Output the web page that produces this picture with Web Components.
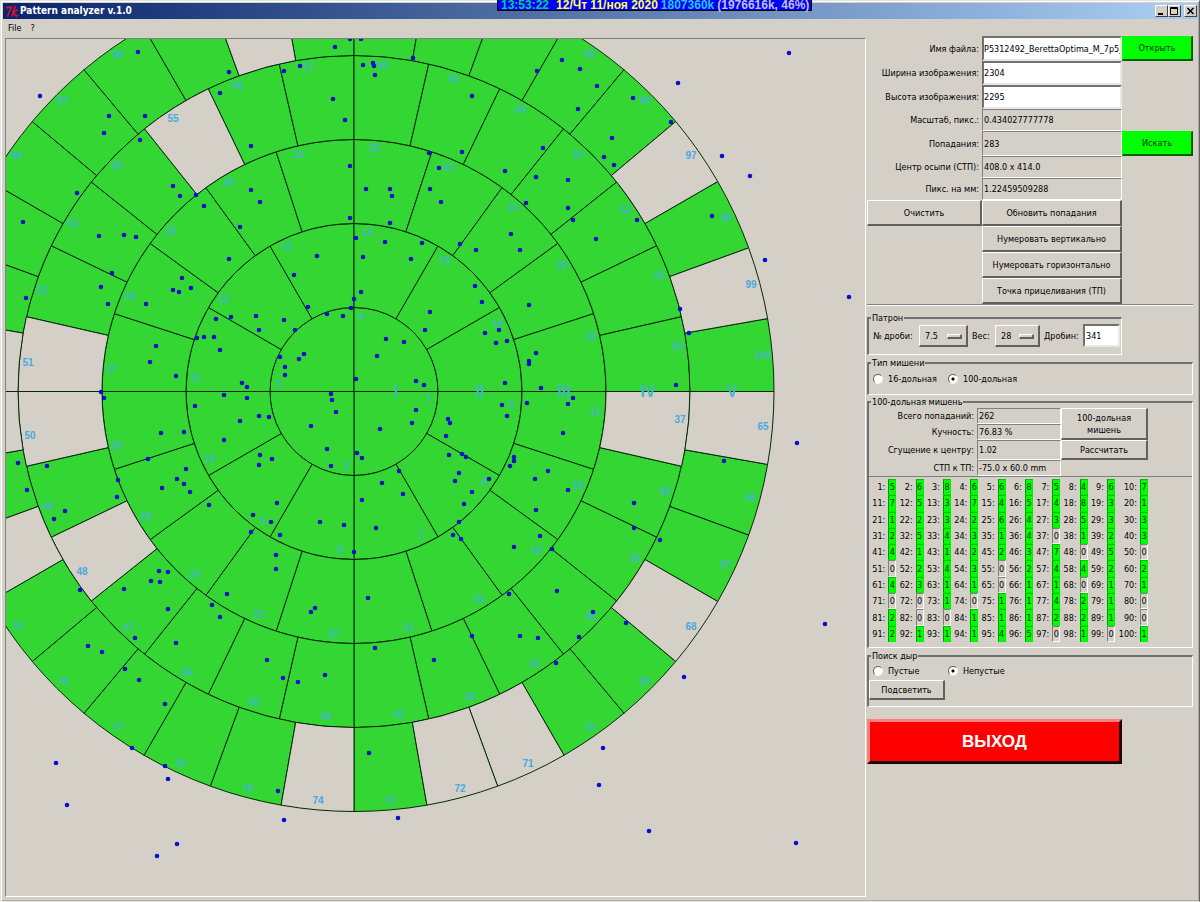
<!DOCTYPE html>
<html lang="ru">
<head>
<meta charset="utf-8">
<title>Pattern analyzer v.1.0</title>
<style>
  html, body { margin: 0; }
  body {
    background: #d4d0c8;
    color: #000;
    font: 9px/12px "DejaVu Sans Condensed", "Noto Sans", sans-serif;
  }
</style>
</head>
<body>
<pa-app></pa-app>

<script>
const define = (name, html, init) => {
  const template = document.createElement('template');
  template.innerHTML = html;
  customElements.define(name, class extends HTMLElement {
    constructor() {
      super();
      this.attachShadow({ mode: 'open' }).append(template.content.cloneNode(true));
    }
    connectedCallback() {
      if (init && !this.ready) { this.ready = true; init(this, this.shadowRoot); }
    }
  });
};

// Hits per sector, sectors 1..100.
const COUNTS = [
  5,6,8,6,6,8,5,4,6,7,
  7,5,3,7,4,5,4,8,3,1,
  1,2,3,2,6,4,3,5,3,3,
  2,5,4,3,1,4,0,1,2,3,
  4,1,1,2,2,3,7,0,5,0,
  0,2,4,3,0,2,4,4,2,2,
  4,3,1,1,0,1,1,0,1,1,
  0,0,1,0,1,1,4,2,1,0,
  2,0,0,1,1,1,2,2,1,0,
  2,1,1,1,4,5,0,1,0,1
];

// Pellet hits as x,y pairs.
const HITS = `138,52 40,96 109,116 104,133 145,116 140,140 229,72 220,93 251,146 284,71 300,66 333,99 345,120
335,47 350,39 361,39 363,65 373,63 374,66 375,75 413,58 429,153 439,168 430,189 441,202 350,166 366,189 390,189
392,196 390,223 350,218 356,238 173,186 180,196 196,195 204,206 251,190 260,202 240,227 77,193 23,222 99,236
124,235 136,237 562,60 580,69 537,71 597,86 472,96 578,109 633,98 671,122 612,138 604,157 614,165 543,148
462,152 505,171 536,177 568,180 526,203 568,208 573,220 637,220 511,234 596,239 712,216 678,83 789,53 722,156
750,176 112,273 101,287 108,304 26,298 146,304 182,278 173,290 179,292 191,288 229,259 317,256 294,275 308,307
327,314 343,316 351,308 354,299 361,292 363,257 385,242 422,243 411,259 430,312 425,330 386,339 404,342 377,356
216,319 231,317 256,316 259,330 284,320 295,330 197,338 204,337 214,337 220,350 280,357 299,359 304,354 285,367
285,375 156,346 150,362 176,376 242,383 247,387 224,395 247,398 195,406 101,392 104,398 240,421 259,416 269,417
224,440 356,379 331,394 332,400 336,412 311,426 380,429 416,381 424,385 416,410 412,423 327,449 357,453 362,458
331,466 260,455 272,459 259,465 161,433 184,432 148,459 186,469 18,463 47,466 399,471 460,244 476,250 520,250
475,286 482,302 529,305 485,333 499,330 496,343 507,341 536,353 529,361 529,364 505,383 541,388 502,405 507,416
527,403 573,398 568,404 563,433 448,419 450,423 446,436 449,455 462,454 466,457 514,457 514,461 510,466 548,471
676,385 680,309 689,333 765,260 849,297 797,443 724,461 27,490 118,480 117,497 65,511 54,519 177,479 184,484
190,492 162,488 209,505 277,503 253,515 271,522 251,532 280,535 320,522 344,525 354,552 376,528 362,500 382,483
403,494 276,555 276,569 227,594 212,605 220,617 159,571 168,572 151,581 160,582 124,589 80,590 168,609 135,638
176,643 88,646 102,652 125,669 139,680 267,660 283,678 298,682 325,675 311,612 315,608 368,598 375,648 434,660
459,473 455,481 472,492 464,504 459,522 489,479 535,479 568,490 536,510 540,536 514,547 552,549 453,535 461,539
634,503 634,528 660,540 509,594 557,591 593,612 626,623 579,637 472,636 520,636 538,638 556,663 825,624 684,677
165,704 132,748 165,766 168,779 56,763 67,805 278,791 284,820 177,844 157,856 369,753 398,818 603,748 599,785
649,831 796,843`.trim().split(/\s+/).map(p => p.split(',').map(Number));

define('pa-titlebar', `
<style>
  :host { display: flex; align-items: center; height: 16px; padding: 0 1px 0 2px; gap: 1px;
    color: #fff; background: linear-gradient(90deg, #0a246a, #a6caf0 97%); }
  h1 { flex: 1; margin: 0; font-size: 10px; line-height: 14px; font-weight: bold; }
  .buttons { display: flex; }
  button { display: block; width: 13px; height: 12px; padding: 0; background: #d4d0c8;
    border: 1px solid; border-color: #fff #404040 #404040 #fff; }
  button:last-child { margin-left: 3px; }
  svg { display: block; }
</style>
<svg width="14" height="13" viewBox="0 0 14 13" fill="none" stroke="#d8102c" stroke-width="1.6" aria-hidden="true">
  <path d="M1 3.2C3 1.4 5 3.4 7 1.6C5 4.6 3.4 7.6 2.6 11.6"/><path d="M10.6 1C8.6 4.6 7.6 8 7.2 11.6M12.8 4.4L8.4 7.6L11.4 11.6L13 10"/>
</svg>
<h1><slot></slot></h1>
<div class="buttons">
  <button aria-label="Свернуть"><svg width="11" height="10"><path d="M2 8h5" stroke="#000" stroke-width="2"/></svg></button>
  <button aria-label="Развернуть"><svg width="11" height="10"><path d="M1.500 1.500h7v7h-7zM1 2.500h8" fill="none" stroke="#000"/></svg></button>
  <button aria-label="Закрыть"><svg width="11" height="10"><path d="M2.500 2l6 6M8.500 2l-6 6" stroke="#000" stroke-width="1.500"/></svg></button>
</div>`);

define('pa-clock', `
<style>
  :host { display: flex; gap: 5px; box-sizing: border-box; height: 11px; padding: 0 2px 0 3px; white-space: nowrap;
    background: #0000f4; border: solid #000; border-width: 0 1px 1px;
    font: bold 12px/11px "Liberation Sans", Arial, sans-serif; }
  .time { color: #00d090; margin-right: 2px; }
  .date { color: #ffff50; margin-right: -2px; }
  .used { color: #20c8ff; margin-right: -2px; }
  .total { color: #c0c0f0; }
</style>
<span class="time">13:53:22</span><span class="date">12/Чт 11/ноя 2020</span>
<span class="used">1807360k</span><span class="total">(1976616k, 46%)</span>`);

define('pa-menubar', `
<style>
  :host { display: flex; gap: 9px; height: 17px; padding: 0 5px; align-items: center; }
  button { font: inherit; border: 0; padding: 0; background: none; color: inherit; }
</style>
<button>File</button><button>?</button>`);

define('pa-target', `
<style>
  :host { display: block; box-sizing: border-box; overflow: hidden; background: #d4d0c8;
    border: 1px solid; border-color: #808080 #fff #fff #808080; }
  svg { display: block; width: 100%; height: 100%; }
  .sector { fill: #33d633; stroke: #062806; }
  .empty { fill: #d4d0c8; }
  text { fill: #44b8c0; font: bold 10px "Liberation Sans", Arial, sans-serif; text-anchor: middle; }
  text.on-empty { fill: #4aa8e0; }
  text.roman { font-size: 16px; fill: #46b4cc; }
  circle { fill: #0a10c8; }
</style>
<svg role="img" aria-label="100-дольная мишень"><g transform="translate(-6 -39)"></g></svg>`,
(host, root) => {
  const g = root.querySelector('g');
  const cx = 354, cy = 391.5, step = 84, rings = [4, 12, 20, 28, 36];
  const at = (r, deg) => {
    const a = deg * Math.PI / 180;
    return [(cx + r * Math.cos(a)).toFixed(2), (cy + r * Math.sin(a)).toFixed(2)];
  };
  let shapes = '', empties = '', labels = '', n = 0;
  rings.forEach((count, ring) => {
    const r0 = ring * step, r1 = r0 + step, d = 360 / count;
    for (let i = 0; i < count; i++) {
      const empty = COUNTS[n++] === 0;
      const path = `M${at(r0, i * d)}L${at(r1, i * d)}A${r1} ${r1} 0 0 1 ${at(r1, i * d + d)}L${at(r0, i * d + d)}`
        + (r0 ? `A${r0} ${r0} 0 0 0 ${at(r0, i * d)}Z` : 'Z');
      const shape = `<path class="sector${empty ? ' empty' : ''}" d="${path}"/>`;
      if (empty) empties += shape; else shapes += shape;
      const [x, y] = at(r1 - 9, i * d + 5).map(Math.round);
      // Sectors whose number falls outside the canvas get no label.
      if (x > 11 && y > 44) {
        labels += `<text x="${x}" y="${y + 3}"${empty ? ' class="on-empty"' : ''}>${n}</text>`;
      }
    }
  });
  ['I', 'II', 'III', 'IV', 'V'].forEach((t, i) => {
    labels += `<text class="roman${i > 2 ? ' on-empty' : ''}" x="${cx + 42 + step * i}" y="397">${t}</text>`;
  });
  g.innerHTML = shapes + empties + labels + HITS.map(([x, y]) => `<circle cx="${x}" cy="${y}" r="2.300"/>`).join('');
});

define('pa-button', `
<style>
  :host { display: flex; --face: #d4d0c8; --light: #fff; --dark: #606060; }
  :host([kind="go"]) { --face: #00ff00; --light: #00ff00; --dark: #006000; }
  :host([kind="exit"]) { --face: #ff0000; --light: #ff8080; --dark: #200000; }
  button { flex: 1; box-sizing: border-box; min-width: 0; margin: 0; padding: 0 9px; font: inherit; color: inherit;
    background: var(--face); border: solid; border-width: 1px 2px 2px 1px;
    border-color: var(--light) var(--dark) var(--dark) var(--light); }
  :host([kind="go"]) button { color: #003800; }
  :host([kind="exit"]) button { color: #fff; border-width: 3px; font: bold 17px/20px "Liberation Sans", Arial, sans-serif; }
</style>
<button><slot></slot></button>`);

define('pa-field', `
<style>
  :host { display: grid; grid-template-columns: 115px 140px 71px; align-items: stretch; height: 24px; }
  :host([compact]) { height: 22px; }
  :host([tall]) { height: 25px; }
  :host([result]) { grid-template-columns: 108px 84px; height: 16px; }
  :host([result][tall]) { height: 20px; }
  label { display: flex; align-items: center; justify-content: flex-end; padding-right: 3px; }
  input, output { display: flex; align-items: center; box-sizing: border-box; width: 100%; min-width: 0; margin: 0;
    padding: 0 1px; font: inherit; color: inherit; border: 1px solid; border-color: #808080 #fff #fff #808080; }
  input { background: #fff; border-width: 2px; border-color: #707070 #e8e8e8 #e8e8e8 #707070; border-radius: 0; padding: 0; }
</style>
<label for="v"></label>
<slot></slot>`,
(host, root) => {
  const readonly = host.hasAttribute('readonly');
  const control = document.createElement(readonly ? 'output' : 'input');
  control.id = 'v';
  root.querySelector('label').textContent = host.getAttribute('label');
  if (readonly) control.textContent = host.getAttribute('value');
  else control.value = host.getAttribute('value');
  root.querySelector('label').after(control);
});

define('pa-group', `
<style>
  :host { display: block; }
  fieldset { min-width: 0; margin: 0; padding: 0; border: solid; border-width: 2px 1px 1px 2px;
    border-color: #707070 #fff #fff #707070; }
  legend { margin-left: 2px; padding: 0 1px; line-height: 12px; }
</style>
<fieldset><legend></legend><slot></slot></fieldset>`,
(host, root) => { root.querySelector('legend').textContent = host.getAttribute('caption'); });

define('pa-cartridge', `
<style>
  :host { display: grid; grid-template-columns: 50px 49px 27px 45px 43px 37px; height: 23px; padding-bottom: 7px; }
  label { align-self: center; padding-left: 4px; white-space: nowrap; }
  label:first-child { padding-left: 1px; }
  .menu { position: relative; display: flex; }
  select { flex: 1; min-width: 0; box-sizing: border-box; margin: 1px 0 0; padding: 0 5px; font: inherit; color: inherit;
    appearance: none; background: #d4d0c8; border: solid; border-width: 1px 2px 2px 1px;
    border-color: #fff #606060 #606060 #fff; border-radius: 0; }
  .menu::after { content: ""; position: absolute; right: 6px; top: 10px; width: 12px; height: 2px; pointer-events: none;
    border: solid; border-width: 1px 2px 2px 1px; border-color: #fff #606060 #606060 #fff; }
  input { box-sizing: border-box; width: 100%; margin: 0; padding: 0 1px; font: inherit; background: #fff; color: inherit;
    border: 2px solid; border-color: #707070 #e8e8e8 #e8e8e8 #707070; border-radius: 0; }
</style>
<label for="shot">№ дроби:</label><span class="menu"><select id="shot"><option>7.5</option></select></span>
<label for="weight">Вес:</label><span class="menu"><select id="weight"><option>28</option></select></span>
<label for="pellets">Дробин:</label><input id="pellets" value="341">`);

define('pa-choice', `
<style>
  :host { display: grid; grid-template-columns: 75px auto; justify-content: start; padding-left: 4px; }
  label { display: flex; align-items: center; gap: 5px; height: 18px; }
  input { appearance: none; box-sizing: border-box; width: 10px; height: 10px; margin: 0; border-radius: 50%;
    border: 1px solid; border-color: #606060 #f4f4f4 #f4f4f4 #606060; background: #fff; }
  input:checked { background: radial-gradient(circle, #000 0 1px, #fff 2px); }
</style>
<label><input type="radio" name="choice"><span></span></label>
<label><input type="radio" name="choice" checked><span></span></label>`,
(host, root) => {
  const spans = root.querySelectorAll('span');
  spans[0].textContent = host.getAttribute('first');
  spans[1].textContent = host.getAttribute('second');
});

define('pa-counts', `
<style>
  :host { display: block; }
  table { width: 279px; height: 163px; table-layout: fixed; border-collapse: separate; border-spacing: 0; }
  col.value { width: 8px; }
  col.last { width: 25px; }
  th { padding: 0 3px 0 0; font-weight: normal; text-align: right; white-space: nowrap; }
  td { padding: 0; text-align: center; border: 1px solid; border-color: #808080 #fff #fff #808080; }
  td.hit { background: #00ff00; color: #003000; border-color: #00c000 #00f000 #00f000 #009800; }
</style>
<table aria-label="Попадания по долям"><colgroup></colgroup><tbody></tbody></table>`,
(host, root) => {
  let cols = '', rows = '';
  for (let c = 0; c < 10; c++) cols += `<col${c === 9 ? ' class="last"' : ''}><col class="value">`;
  for (let r = 0; r < 10; r++) {
    rows += '<tr>';
    for (let c = 0; c < 10; c++) {
      const v = COUNTS[r * 10 + c];
      rows += `<th>${r * 10 + c + 1}:</th><td${v ? ' class="hit"' : ''}>${v}</td>`;
    }
    rows += '</tr>';
  }
  root.querySelector('colgroup').innerHTML = cols;
  root.querySelector('tbody').innerHTML = rows;
});

define('pa-panel', `
<style>
  :host { display: block; width: 326px; padding-right: 5px; }
  .actions { display: grid; grid-template-columns: 115px 140px; grid-auto-rows: 26px; }
  .actions pa-button:nth-child(n+3) { grid-column: 2; }
  hr { margin: 0; border: solid; border-width: 1px 0; border-color: #808080 transparent #fff; height: 0; }
  .short { width: 255px; }
  .patron { margin-top: 6px; }
  .type { margin-top: 2px; }
  .type pa-choice { padding-top: 1px; padding-bottom: 6px; }
  .score { margin-top: 1px; }
  .results { display: grid; grid-template-columns: 192px 87px; border-bottom: 1px solid #808080; }
  .compute { display: grid; grid-template-rows: 32px 20px; align-content: start; }
  pa-counts { padding: 2px 0 5px; }
  .holes { margin-top: 2px; }
  .holes pa-button { width: 76px; height: 20px; margin-bottom: 6px; }
  .exit { width: 255px; height: 45px; margin-top: 12px; }
</style>
<pa-field label="Имя файла:" value="P5312492_BerettaOptima_M_7p5_28.jpg" tall><pa-button kind="go">Открыть</pa-button></pa-field>
<pa-field label="Ширина изображения:" value="2304"></pa-field>
<pa-field label="Высота изображения:" value="2295"></pa-field>
<pa-field label="Масштаб, пикс.:" value="0.434027777778" readonly compact></pa-field>
<pa-field label="Попадания:" value="283" readonly tall><pa-button kind="go">Искать</pa-button></pa-field>
<pa-field label="Центр осыпи (СТП):" value="408.0 x 414.0" readonly compact></pa-field>
<pa-field label="Пикс. на мм:" value="1.22459509288" readonly compact></pa-field>
<div class="actions">
  <pa-button>Очистить</pa-button><pa-button>Обновить попадания</pa-button>
  <pa-button>Нумеровать вертикально</pa-button>
  <pa-button>Нумеровать горизонтально</pa-button>
  <pa-button>Точка прицеливания (ТП)</pa-button>
</div>
<hr>
<pa-group class="short patron" caption="Патрон"><pa-cartridge></pa-cartridge></pa-group>
<pa-group class="type" caption="Тип мишени"><pa-choice first="16-дольная" second="100-дольная"></pa-choice></pa-group>
<pa-group class="score" caption="100-дольная мишень">
  <div class="results">
    <div>
      <pa-field result readonly label="Всего попаданий:" value="262"></pa-field>
      <pa-field result readonly label="Кучность:" value="76.83 %"></pa-field>
      <pa-field result readonly tall label="Сгущение к центру:" value="1.02"></pa-field>
      <pa-field result readonly label="СТП к ТП:" value="-75.0 x 60.0 mm"></pa-field>
    </div>
    <div class="compute"><pa-button>100-дольная мишень</pa-button><pa-button>Рассчитать</pa-button></div>
  </div>
  <pa-counts></pa-counts>
</pa-group>
<pa-group class="holes" caption="Поиск дыр">
  <pa-choice first="Пустые" second="Непустые"></pa-choice>
  <pa-button>Подсветить</pa-button>
</pa-group>
<pa-button class="exit" kind="exit">ВЫХОД</pa-button>`);

define('pa-app', `
<style>
  :host { display: flex; flex-direction: column; box-sizing: border-box; min-height: 100vh; position: relative;
    padding: 2px 1px 1px 2px; border: 1px solid; border-color: #e4e2dc #606060 #e4e2dc #e4e2dc;
    box-shadow: inset 1px 1px #fff, inset -1px -1px #b0aca4; }
  main { flex: 1; display: flex; gap: 1px; padding: 0 0 3px 2px; }
  pa-target { flex: 1; min-width: 0; min-height: 700px; margin-top: 2px; }
  pa-clock { position: absolute; top: -1px; left: 496px; }
</style>
<pa-titlebar>Pattern analyzer v.1.0</pa-titlebar>
<pa-menubar></pa-menubar>
<main><pa-target></pa-target><pa-panel></pa-panel></main>
<pa-clock></pa-clock>`);
</script>
</body>
</html>
